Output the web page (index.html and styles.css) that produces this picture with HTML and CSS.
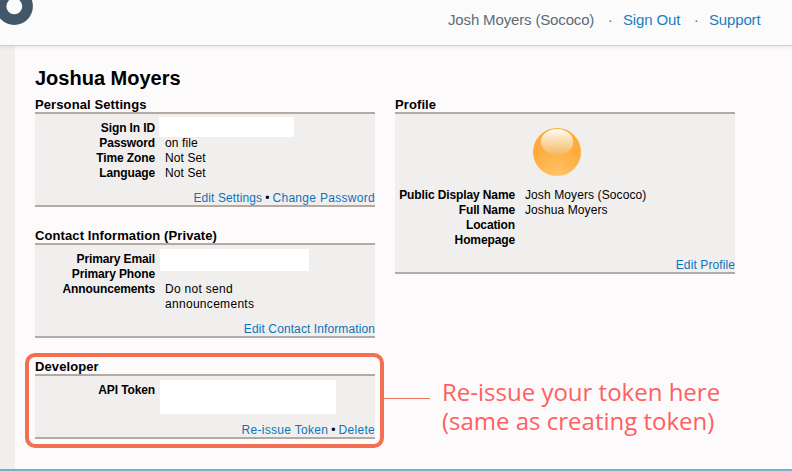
FILE: index.html
```html
<!DOCTYPE html>
<html lang="en">
<head>
<meta charset="utf-8">
<title>Joshua Moyers</title>
<link rel="stylesheet" href="styles.css">
</head>
<body>
<header class="topbar">
  <svg class="logo" width="34" height="26" viewBox="0 0 34 26"><circle cx="14.3" cy="6.3" r="13.3" fill="none" stroke="#42586a" stroke-width="10.6"/></svg>
  <nav class="account">
    <span class="user">Josh Moyers (Sococo)</span><span class="sep">·</span><a class="signout">Sign Out</a><span class="sep">·</span><a class="support">Support</a>
  </nav>
</header>
<main class="page">
  <h1>Joshua Moyers</h1>
  <div class="columns">
    <div class="column">
      <section>
        <h2>Personal Settings</h2>
        <div class="panel">
          <dl>
            <dt>Sign In ID</dt><dd><span class="mask mask-id"></span></dd>
            <dt>Password</dt><dd>on file</dd>
            <dt>Time Zone</dt><dd>Not Set</dd>
            <dt>Language</dt><dd>Not Set</dd>
          </dl>
          <div class="links"><a>Edit Settings</a><span class="dot">•</span><a class="wide">Change Password</a></div>
        </div>
      </section>
      <section>
        <h2>Contact Information (Private)</h2>
        <div class="panel">
          <dl>
            <dt>Primary Email</dt><dd><span class="mask mask-email"></span></dd>
            <dt>Primary Phone</dt><dd></dd>
            <dt>Announcements</dt><dd class="wide">Do not send announcements</dd>
          </dl>
          <div class="links"><a>Edit Contact Information</a></div>
        </div>
      </section>
      <section class="developer">
        <h2>Developer</h2>
        <div class="panel panel-token">
          <dl>
            <dt>API Token</dt><dd><span class="mask mask-token"></span></dd>
          </dl>
          <div class="links"><a class="wide">Re-issue Token</a><span class="dot">•</span><a class="wide">Delete</a></div>
        </div>
        <div class="highlight"></div>
        <div class="pointer"></div>
        <p class="note">Re-issue your token here<br>(same as creating token)</p>
      </section>
    </div>
    <div class="column">
      <section>
        <h2>Profile</h2>
        <div class="panel panel-profile">
          <svg class="avatar" width="48" height="48" viewBox="0 0 48 48">
            <defs>
              <radialGradient id="orb" cx=".5" cy="1" r=".65"><stop offset="0" stop-color="#ffc369"/><stop offset="1" stop-color="#ffac3c"/></radialGradient>
              <linearGradient id="shine" x1="0" y1="0" x2="0" y2="1"><stop offset="0" stop-color="#fffdf8"/><stop offset=".45" stop-color="#f9dcad"/><stop offset="1" stop-color="#f5b85f"/></linearGradient>
            </defs>
            <circle cx="24" cy="24" r="24" fill="url(#orb)"/>
            <ellipse cx="24" cy="14" rx="16.2" ry="13" fill="url(#shine)"/>
          </svg>
          <dl>
            <dt>Public Display Name</dt><dd>Josh Moyers (Sococo)</dd>
            <dt>Full Name</dt><dd>Joshua Moyers</dd>
            <dt>Location</dt><dd></dd>
            <dt>Homepage</dt><dd></dd>
          </dl>
          <div class="links"><a>Edit Profile</a></div>
        </div>
      </section>
    </div>
  </div>
</main>
</body>
</html>
```

FILE: styles.css
```css
* { box-sizing: border-box; }
body {
  margin: 0;
  height: 471px;
  overflow: hidden;
  display: flex;
  flex-direction: column;
  background: #fcfafb;
  font: 12px/15px "Liberation Sans", Arial, sans-serif;
  color: #000;
}
a { color: #1172b8; text-decoration: none; }
h1, h2, dl, dd, p { margin: 0; }
.topbar {
  height: 46px;
  flex: none;
  display: flex;
  justify-content: space-between;
  background: #fbfbfb;
  border-bottom: 1px solid #cfcfd0;
  box-shadow: 0 1px 4px rgba(0, 0, 0, .09);
  z-index: 1;
}
.logo { display: block; }
.account {
  display: flex;
  width: 344px;
  padding-top: 11px;
  font-size: 15px;
  line-height: 18px;
  letter-spacing: -.15px;
  color: #5d6b77;
  white-space: nowrap;
}
.account a { color: #1d7dc0; }
.user { width: 147px; }
.sep { width: 28px; padding-left: 13px; font-size: 14px; }
.signout { width: 58px; }
.page {
  flex: 1;
  padding: 20px 0 0 35px;
  background: linear-gradient(90deg, #f0efed 15px, #fcfafb 15px);
  border-bottom: 2px solid #7badc4;
}
h1 { font-size: 20px; line-height: 24px; }
.columns { display: flex; gap: 20px; padding-top: 7px; align-items: flex-start; }
.column { width: 340px; display: flex; flex-direction: column; gap: 21px; }
h2 { font-size: 13px; line-height: 15px; letter-spacing: .1px; }
.panel {
  height: 95px;
  padding-top: 7px;
  display: flex;
  flex-direction: column;
  background: #f0efed;
  border: solid #b2aaa3;
  border-width: 2px 0;
}
.panel-token { height: 65px; }
.panel-profile { height: 162px; padding-top: 14px; }
.avatar { display: block; flex: none; margin: 0 0 12px 138px; }
dl { display: grid; grid-template-columns: 120px 110px; column-gap: 10px; grid-auto-rows: minmax(15px, auto); }
.panel-profile dl { grid-template-columns: 120px 200px; }
dt { text-align: right; font-weight: bold; letter-spacing: -.12px; }
dd { letter-spacing: .1px; }
.mask { display: block; background: #fff; }
.mask-id { width: 135px; height: 20px; margin: -4px 0 -1px -6px; }
.mask-email { width: 149px; height: 22px; margin: -3px 0 -4px -5px; }
.mask-token { width: 176px; height: 34px; margin: -3px 0 -16px -5px; }
.links { margin: auto 0 -1px; text-align: right; letter-spacing: .1px; }
.wide { letter-spacing: .3px; }
.dot { margin: 0 3px; }
.developer { position: relative; }
.highlight {
  position: absolute;
  left: -10px;
  top: -6px;
  width: 359px;
  height: 95px;
  border: 4px solid #f36f52;
  border-radius: 10px;
}
.pointer { position: absolute; left: 349px; top: 39px; width: 46px; height: 1px; background: #e87558; }
.note {
  position: absolute;
  left: 407px;
  top: 18px;
  font: 24px/29px "Open Sans", sans-serif;
  color: #ff5f62;
  white-space: nowrap;
}
```
